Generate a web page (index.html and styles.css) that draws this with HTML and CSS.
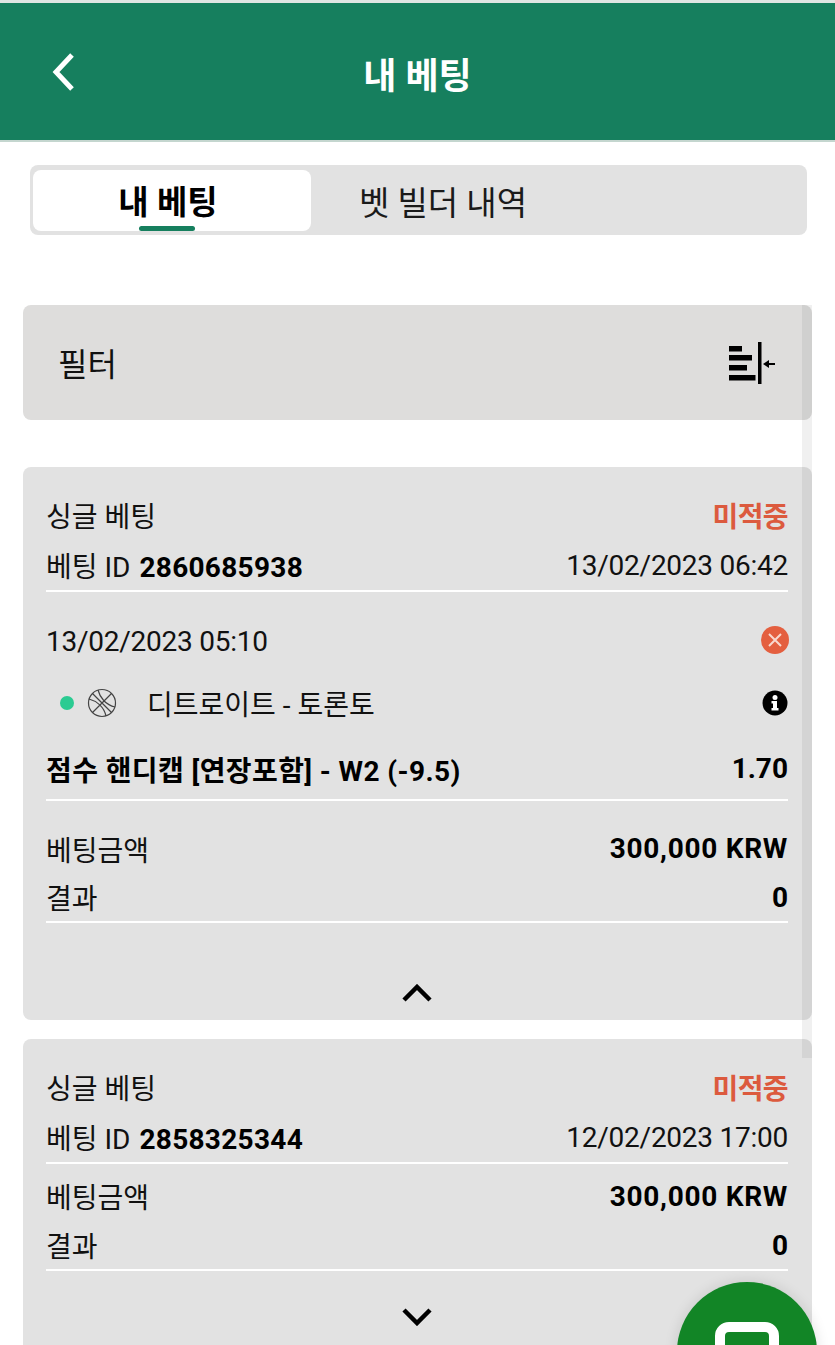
FILE: index.html
```html
<!DOCTYPE html>
<html>
<head>
    <title>내 베팅</title>
    <meta charset="utf-8">
    <link rel="stylesheet" href="styles.css">
</head>
<body>
<div class="page">
    <div class="header">
        <svg class="back" width="26" height="40" viewBox="0 0 26 40"><path d="M21 3 L5 20 L21 37" fill="none" stroke="#fff" stroke-width="5"/></svg>
        <h1>내 베팅</h1>
    </div>

    <div class="tabs">
        <div class="tab active">내 베팅<span class="underline"></span></div>
        <div class="tab">벳 빌더 내역</div>
    </div>

    <div class="list">
        <div class="scrollbar"></div>

        <div class="filter">
            <span>필터</span>
            <svg width="46" height="42" viewBox="0 0 46 42">
                <rect x="0" y="4" width="13" height="5.5"/>
                <rect x="0" y="13" width="23" height="5.5"/>
                <rect x="0" y="23" width="18" height="5.5"/>
                <rect x="0" y="33" width="26.5" height="5.5"/>
                <rect x="29" y="0" width="3.5" height="42"/>
                <path d="M34 22 L40 18 V21 H46 V23 H40 V26 Z"/>
            </svg>
        </div>

        <div class="card first">
            <div class="row title"><span>싱글 베팅</span><span class="lost">미적중</span></div>
            <div class="row rule id"><span>베팅 ID <b>2860685938</b></span><span class="date">13/02/2023 06:42</span></div>

            <div class="row event-date"><span class="date">13/02/2023 05:10</span>
                <svg class="status" width="28" height="28" viewBox="0 0 28 28"><circle cx="14" cy="14" r="14" fill="#e45f3f"/><path d="M8 8 L20 20 M20 8 L8 20" stroke="#f8d8ce" stroke-width="2"/></svg>
            </div>
            <div class="row event">
                <span class="teams">
                    <span class="live"></span>
                    <svg class="ball" width="30" height="30" viewBox="0 0 30 30" fill="none" stroke="#444" stroke-width="1.2"><circle cx="15" cy="15" r="13.5"/><path d="M5.5 5.5 L24.5 24.5 M24.5 5.5 L5.5 24.5 M11 2 C13 10 19 17 28 19 M2 11 C10 13 17 19 19 28"/></svg>
                    디트로이트 - 토론토
                </span>
                <svg width="26" height="26" viewBox="0 0 26 26"><circle cx="13" cy="13" r="12.5" fill="#000"/><circle cx="13" cy="7.5" r="2.5" fill="#fff"/><path d="M9.5 11 H15 V18 H16.5 V20.5 H9.5 V18 H11 V13.5 H9.5 Z" fill="#fff"/></svg>
            </div>
            <div class="row rule pick"><b>점수 핸디캡 [연장포함] - W2 (-9.5)</b><b class="odds">1.70</b></div>

            <div class="row amount"><span>베팅금액</span><b class="money">300,000 KRW</b></div>
            <div class="row rule"><span>결과</span><b>0</b></div>

            <div class="toggle open">
                <svg width="30" height="18" viewBox="0 0 30 18"><path d="M2 16 L15 3 L28 16" fill="none" stroke="#000" stroke-width="4.5"/></svg>
            </div>
        </div>

        <div class="card second">
            <div class="row title"><span>싱글 베팅</span><span class="lost">미적중</span></div>
            <div class="row rule id"><span>베팅 ID <b>2858325344</b></span><span class="date">12/02/2023 17:00</span></div>
            <div class="row amount-short"><span>베팅금액</span><b class="money">300,000 KRW</b></div>
            <div class="row rule"><span>결과</span><b>0</b></div>
            <div class="toggle">
                <svg width="30" height="18" viewBox="0 0 30 18"><path d="M2 2 L15 15 L28 2" fill="none" stroke="#000" stroke-width="4.5"/></svg>
            </div>
        </div>
    </div>

    <div class="chat">
        <div class="chat-icon"></div>
    </div>
</div>
</body>
</html>
```

FILE: styles.css
```css
* {
    box-sizing: border-box;
}

html, body {
    margin: 0;
    padding: 0;
    background-color: #fff;
}

.page {
    position: relative;
    width: 835px;
    height: 1345px;
    overflow: hidden;
    border-top: 3px solid #dfe6e3;
    background-color: #fff;
    font-family: Roboto, "Noto Sans CJK KR", sans-serif;
    color: #111;
}

.header {
    position: relative;
    height: 139px;
    background-color: #167f5e;
    border-bottom: 2px solid #c4d6cf;
    display: flex;
    align-items: center;
    justify-content: center;
    padding-top: 2px;
}

.header h1 {
    margin: 0;
    color: #fff;
    font-size: 36px;
    font-weight: 700;
}

.back {
    position: absolute;
    left: 51px;
    top: 49px;
}

.tabs {
    display: flex;
    width: 777px;
    height: 70px;
    margin: 23px 0 0 30px;
    padding: 5px 3px 4px;
    background-color: #e2e2e2;
    border-radius: 8px;
}

.tab {
    position: relative;
    width: 278px;
    display: flex;
    align-items: center;
    justify-content: center;
    padding-right: 14px;
    font-size: 33px;
    color: #1a1a1a;
}

.tab.active {
    background-color: #fff;
    border-radius: 8px;
    font-weight: 700;
    color: #000;
    padding-right: 8px;
    padding-bottom: 2px;
}

.underline {
    position: absolute;
    left: 106px;
    bottom: 0;
    width: 56px;
    height: 5px;
    border-radius: 3px;
    background-color: #167f5e;
}

.list {
    position: relative;
    width: 789px;
    margin: 70px 0 0 23px;
}

.scrollbar {
    position: absolute;
    top: 0;
    right: 0;
    width: 10px;
    height: 753px;
    background-color: rgba(0, 0, 0, 0.06);
    z-index: 2;
}

.filter {
    height: 115px;
    display: flex;
    align-items: center;
    justify-content: space-between;
    padding: 0 37px 2px 35px;
    background-color: #dedddc;
    border-radius: 8px;
    font-size: 32px;
}

.filter svg {
    margin-top: 2px;
}

.card {
    background-color: #e2e2e2;
    border-radius: 8px;
    padding: 24px 24px 0 23px;
    font-size: 28px;
}

.card b {
    color: #000;
}

.card.first {
    height: 553px;
    margin-top: 47px;
}

.card.second {
    height: 330px;
    margin-top: 19px;
}

.row {
    display: flex;
    align-items: center;
    justify-content: space-between;
    height: 48px;
}

.row.title {
    margin-bottom: 3px;
}

.row.rule {
    height: 50px;
    border-bottom: 2px solid #fff;
}

.row.id {
    padding-bottom: 2px;
}

.row.id b {
    margin-left: 2px;
    letter-spacing: 0.3px;
}

.date {
    letter-spacing: -0.25px;
}

.lost {
    color: #dc5a3e;
    font-weight: 700;
    letter-spacing: -0.6px;
}

.event-date {
    height: 50px;
    margin-top: 24px;
}

.status {
    margin-right: -1px;
    margin-top: -2px;
}

.event {
    height: 50px;
    margin-top: 12px;
}

.teams {
    display: flex;
    align-items: center;
}

.live {
    width: 14px;
    height: 14px;
    margin-left: 14px;
    border-radius: 50%;
    background-color: #2bcb92;
}

.ball {
    margin: 0 30px 0 13px;
}

.row.pick {
    height: 69px;
    margin-top: 4px;
    padding-top: 6px;
    letter-spacing: 0.4px;
}

.odds {
    letter-spacing: 0;
}

.amount {
    height: 49px;
    margin-top: 23px;
}

.money {
    letter-spacing: 0.7px;
}

.amount-short {
    margin-top: 9px;
    padding-bottom: 2px;
}

.toggle {
    display: flex;
    justify-content: center;
    margin-top: 37px;
}

.toggle.open {
    margin-top: 61px;
}

.chat {
    position: absolute;
    left: 677px;
    top: 1279px;
    width: 140px;
    height: 140px;
    border-radius: 50%;
    background-color: #128526;
    box-shadow: 0 0 14px rgba(0, 0, 0, 0.12);
    z-index: 3;
}

.chat-icon {
    width: 64px;
    height: 60px;
    margin: 40px auto 0;
    border: 10px solid #fff;
    border-radius: 14px;
}
```
